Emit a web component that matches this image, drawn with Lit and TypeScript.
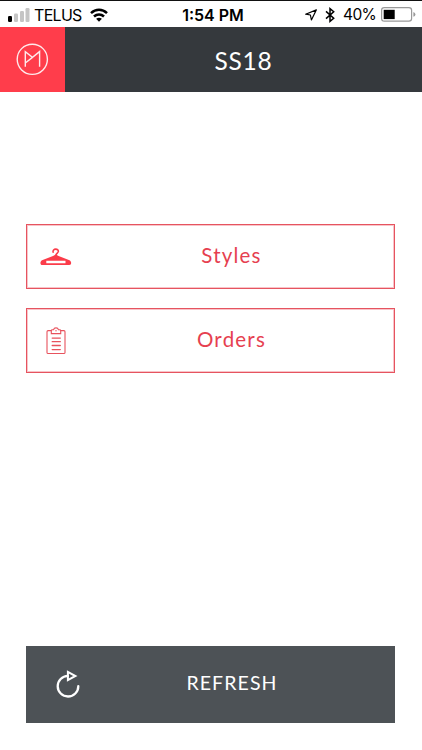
import { html, css, svg, LitElement } from 'lit';
import { customElement, property } from 'lit/decorators.js';

const hanger = svg`
  <svg width="32" height="18" viewBox="0 0 32 18" fill="none" stroke="#fb3c4a">
    <path d="M13.1 4.1C12.7 2.3 14 1.1 15.7 1.1C17.5 1.1 18.6 2.3 18.3 3.7C18 5.1 15.8 5.3 15.8 7.8" stroke-width="1.6" stroke-linecap="round"/>
    <path fill="#fb3c4a" stroke="none" fill-rule="evenodd" d="M15.8 6.6L18.6 8L29.5 12.3C31.7 13.3 31.8 17 29.3 17H2.3C-.2 17-.1 13.3 2 12.3L13 8ZM6.3 12.7V15.2H25.5V12.7Z"/>
  </svg>`;

const clipboard = svg`
  <svg width="20" height="28" viewBox="0 0 20 28" fill="none" stroke="#e8525d" stroke-width="1.1">
    <path d="M5 3.6H2.1Q1 3.6 1 4.7V25.4Q1 26.5 2.1 26.5H17.9Q19 26.5 19 25.4V4.7Q19 3.6 17.9 3.6H15"/>
    <path d="M5.3 6.6V3.7Q5.3 2.8 6.3 2.8H7.5Q8 .9 10 .9Q12 .9 12.5 2.8H13.7Q14.7 2.8 14.7 3.7V6.6Z"/>
    <path d="M6.2 11.1H14.3M6.2 14.7H14.3M6.2 18.5H14.3M6.2 22.6H14.3" stroke-width="1.3" stroke-linecap="round"/>
    <circle cx="10" cy="3.7" r=".7" fill="#e8525d" stroke="none"/>
  </svg>`;

const refresh = svg`
  <svg width="24" height="28" viewBox="0 0 24 28" fill="none" stroke="#fff" stroke-width="2.3">
    <path d="M11.9 5.9A10.3 10.3 0 1 0 22.3 16.2" stroke-linecap="round"/>
    <path d="M11.9 1.9V10.1L19.4 6Z" stroke-width="2" stroke-linejoin="miter"/>
  </svg>`;

@customElement('menu-button')
export class MenuButton extends LitElement {
  static styles = css`
    :host {
      display: block;
    }

    button {
      display: grid;
      grid-template-columns: 57px 1fr 16px;
      align-items: center;
      width: 100%;
      height: 65px;
      padding: 0;
      border: 1px solid #e65460;
      border-radius: 0;
      background: #fff;
      box-shadow: inset 0 0 0 1px #f8c4c9;
      color: #e63f50;
      font: 400 20.5px Lato, "Liberation Sans", sans-serif;
      letter-spacing: 1.2px;
    }

    .icon {
      display: flex;
      justify-content: center;
    }

    .label {
      padding: 0 0 4px 1px;
      text-align: center;
    }

    :host([kind='solid']) button {
      grid-template-columns: 84px 1fr 42px;
      height: 77px;
      border: none;
      background: #4d5256;
      box-shadow: none;
      color: #fff;
      font-size: 19.5px;
      letter-spacing: 1.1px;
    }

    :host([kind='solid']) .icon {
      padding-bottom: 1px;
    }
  `;

  @property() label = '';

  @property({ reflect: true }) kind = 'outline';

  render() {
    return html`
      <button>
        <span class="icon"><slot></slot></span>
        <span class="label">${this.label}</span>
        <span></span>
      </button>
    `;
  }
}

@customElement('app-root')
export class AppRoot extends LitElement {
  static styles = css`
    :host {
      display: flex;
      flex-direction: column;
      box-sizing: border-box;
      width: 422px;
      height: 750px;
      background: #fff;
      font-family: Lato, "Liberation Sans", sans-serif;
      overflow: hidden;
    }

    svg {
      display: block;
    }

    .status {
      display: grid;
      grid-template-columns: 1fr auto 1fr;
      align-items: center;
      box-sizing: border-box;
      height: 27px;
      padding: 1px 6px 0 8px;
      border-top: 1px solid #111;
      color: #000;
      font: 400 16px/24px Inter, sans-serif;
    }

    .side {
      display: flex;
      align-items: center;
    }

    .side.right {
      justify-content: flex-end;
    }

    .carrier {
      margin: 0 8px 0 4px;
      letter-spacing: -0.7px;
    }

    .time {
      padding-left: 2px;
      font-weight: 600;
    }

    .bluetooth {
      margin: 0 8px;
    }

    .percent {
      margin-right: 5px;
      font-size: 15.5px;
      letter-spacing: -0.7px;
    }

    header {
      display: grid;
      grid-template-columns: 65px 1fr;
      grid-template-rows: 65px;
      background: #35393d;
    }

    .logo {
      display: flex;
      align-items: center;
      justify-content: center;
      background: #ff3d4b;
    }

    h1 {
      margin: 0;
      color: #fff;
      font-size: 24.5px;
      font-weight: 400;
      line-height: 67px;
      letter-spacing: 0.8px;
      text-align: center;
    }

    main {
      display: flex;
      flex: 1;
      flex-direction: column;
      gap: 19px;
      padding: 132px 27px 27px 26px;
    }

    .bottom {
      margin-top: auto;
    }
  `;

  render() {
    return html`
      <div class="status">
        <div class="side">
          <svg width="22" height="14" viewBox="0 0 22 14">
            <rect x="0" y="8" width="4" height="6" rx="1.2" fill="#000"/>
            <rect x="6" y="5.5" width="4" height="8.5" rx="1.2" fill="#c5c5c5"/>
            <rect x="12" y="3" width="4" height="11" rx="1.2" fill="#c5c5c5"/>
            <rect x="17.5" y="0" width="4" height="14" rx="1.2" fill="#c5c5c5"/>
          </svg>
          <span class="carrier">TELUS</span>
          <svg width="18" height="14" viewBox="0 0 18 14" fill="none" stroke="#000" stroke-width="2.5">
            <path d="M1 5.1Q4.5 1.7 9 1.7T17 5.1"/>
            <path d="M4 8.5Q6.2 6.4 9 6.4T14 8.5"/>
            <path d="M6.1 10.8Q9 8.6 11.9 10.8L9 13.7Z" fill="#000" stroke="none"/>
          </svg>
        </div>
        <span class="time">1:54 PM</span>
        <div class="side right">
          <svg width="12" height="12" viewBox="0 0 12 12" fill="none" stroke="#000" stroke-width="1.2">
            <path d="M11.3 .9L.7 5.2L5.4 6L6.4 11Z" stroke-linejoin="round"/>
          </svg>
          <svg class="bluetooth" width="10" height="16" viewBox="0 0 10 16" fill="none" stroke="#000" stroke-width="1.5">
            <path d="M1 4.4L8.7 11.3L5 14.4V1.6L8.7 4.7L1 11.6"/>
          </svg>
          <span class="percent">40%</span>
          <svg width="35" height="15" viewBox="0 0 35 15">
            <rect x=".6" y=".6" width="30" height="13.6" rx="2.7" fill="#fff" stroke="#999" stroke-width="1.2"/>
            <rect x="2.7" y="2.8" width="11" height="9.3" fill="#000"/>
            <path d="M32.4 5Q34.4 5.6 34.4 7.4T32.4 9.8Z" fill="#999"/>
          </svg>
        </div>
      </div>
      <header>
        <div class="logo">
          <svg width="33" height="33" viewBox="0 0 33 33" fill="none" stroke="#ffe9eb" stroke-width="1.4">
            <circle cx="16.3" cy="16.3" r="15.1"/>
            <path d="M9.3 23.8V8.6L16.5 14.4L23.6 8.6V23.8M9.3 20L16.5 14.4"/>
          </svg>
        </div>
        <h1>SS18</h1>
      </header>
      <main>
        <menu-button label="Styles">${hanger}</menu-button>
        <menu-button label="Orders">${clipboard}</menu-button>
        <menu-button class="bottom" kind="solid" label="REFRESH">${refresh}</menu-button>
      </main>
    `;
  }
}
